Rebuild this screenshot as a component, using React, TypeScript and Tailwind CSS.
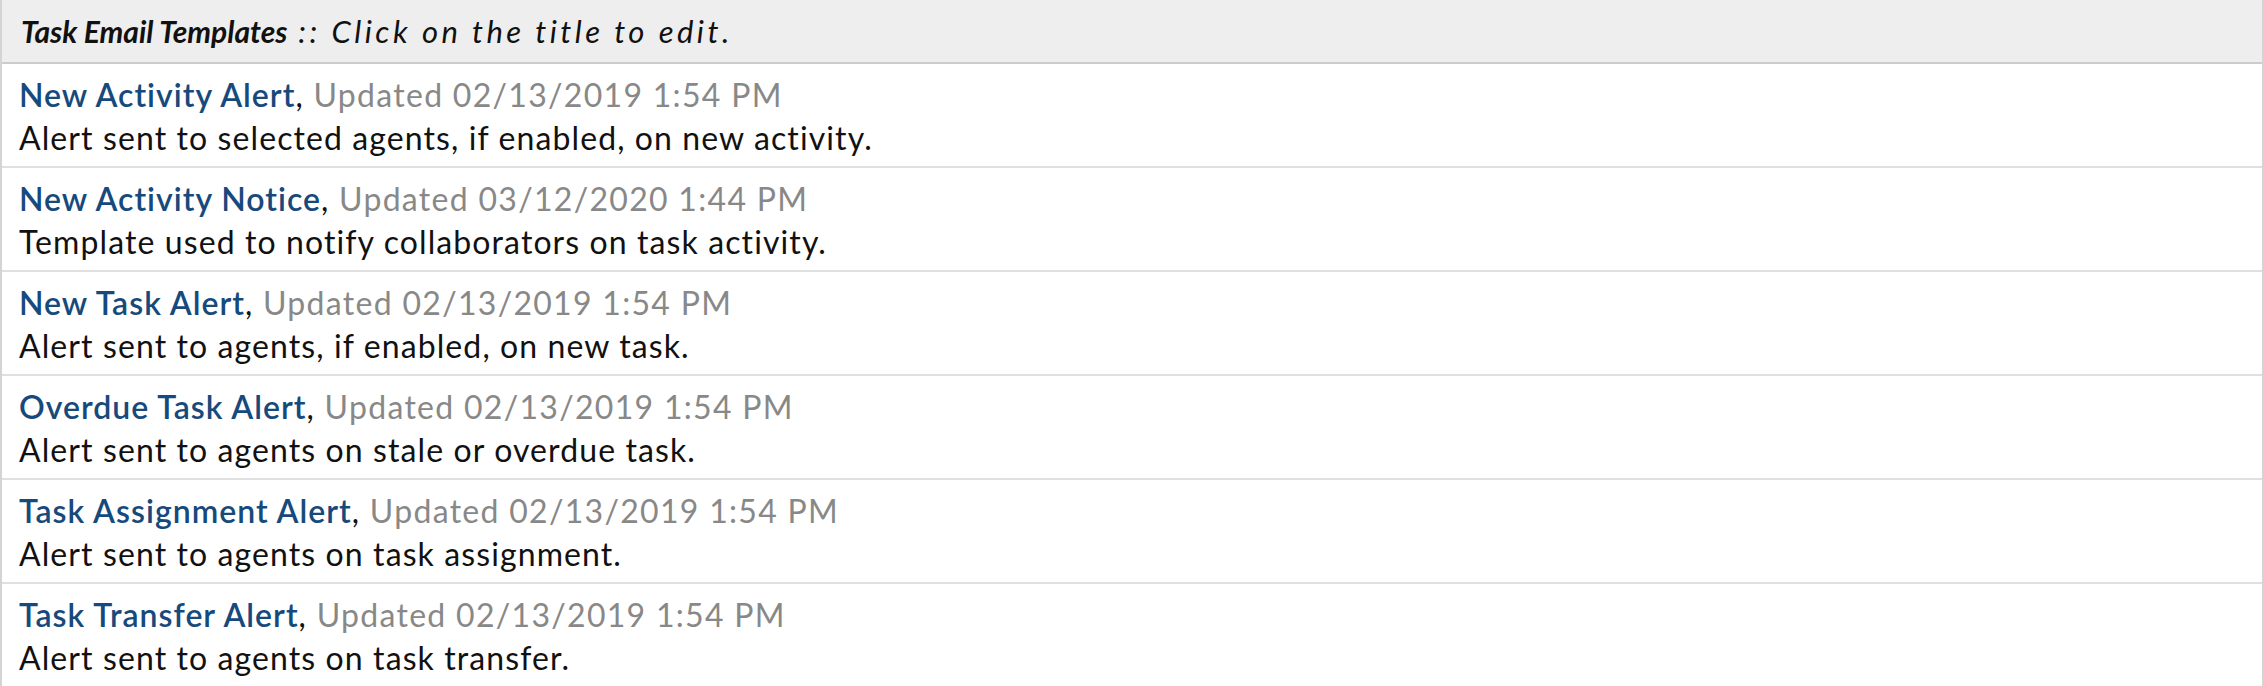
import React from "react"

const templates = [
  {
    title: "New Activity Alert",
    updated: "02/13/2019 1:54 PM",
    desc: "Alert sent to selected agents, if enabled, on new activity.",
  },
  {
    title: "New Activity Notice",
    updated: "03/12/2020 1:44 PM",
    desc: "Template used to notify collaborators on task activity.",
  },
  {
    title: "New Task Alert",
    updated: "02/13/2019 1:54 PM",
    desc: "Alert sent to agents, if enabled, on new task.",
  },
  {
    title: "Overdue Task Alert",
    updated: "02/13/2019 1:54 PM",
    desc: "Alert sent to agents on stale or overdue task.",
  },
  {
    title: "Task Assignment Alert",
    updated: "02/13/2019 1:54 PM",
    desc: "Alert sent to agents on task assignment.",
  },
  {
    title: "Task Transfer Alert",
    updated: "02/13/2019 1:54 PM",
    desc: "Alert sent to agents on task transfer.",
  },
]

const App = () => {
  return (
    <div
      className="w-[2264px] h-[686px] overflow-hidden bg-white"
      style={{ fontFamily: "Lato, 'Noto Sans', sans-serif" }}>
      <div className="border-x-2 border-[#d4d4d4]">
        <div className="h-[64px] bg-[#eeeeee] border-b-2 border-[#cccccc] pl-[19px] flex items-center">
          <p className="text-[30px] italic text-[#111] leading-none">
            <b>Task Email Templates</b>
            <span className="text-[31px] tracking-[3.5px]"> :: Click on the title to edit.</span>
          </p>
        </div>
        {templates.map((t, i) => (
          <div
            key={i}
            className="pl-[17px] pt-[9px] pb-[7px] border-b-2 border-[#e0e0e0]">
            <div className="text-[32px] leading-[43px] text-[#888] tracking-[1.3px]">
              <a href="#" className="text-[#174a7c] font-semibold tracking-[1px]">
                {t.title}
              </a>
              <span className="text-[#111]">,</span> Updated {t.updated}
            </div>
            <div className="text-[32px] leading-[43px] text-[#111] tracking-[1.1px]">
              {t.desc}
            </div>
          </div>
        ))}
      </div>
    </div>
  )
}

export default App
